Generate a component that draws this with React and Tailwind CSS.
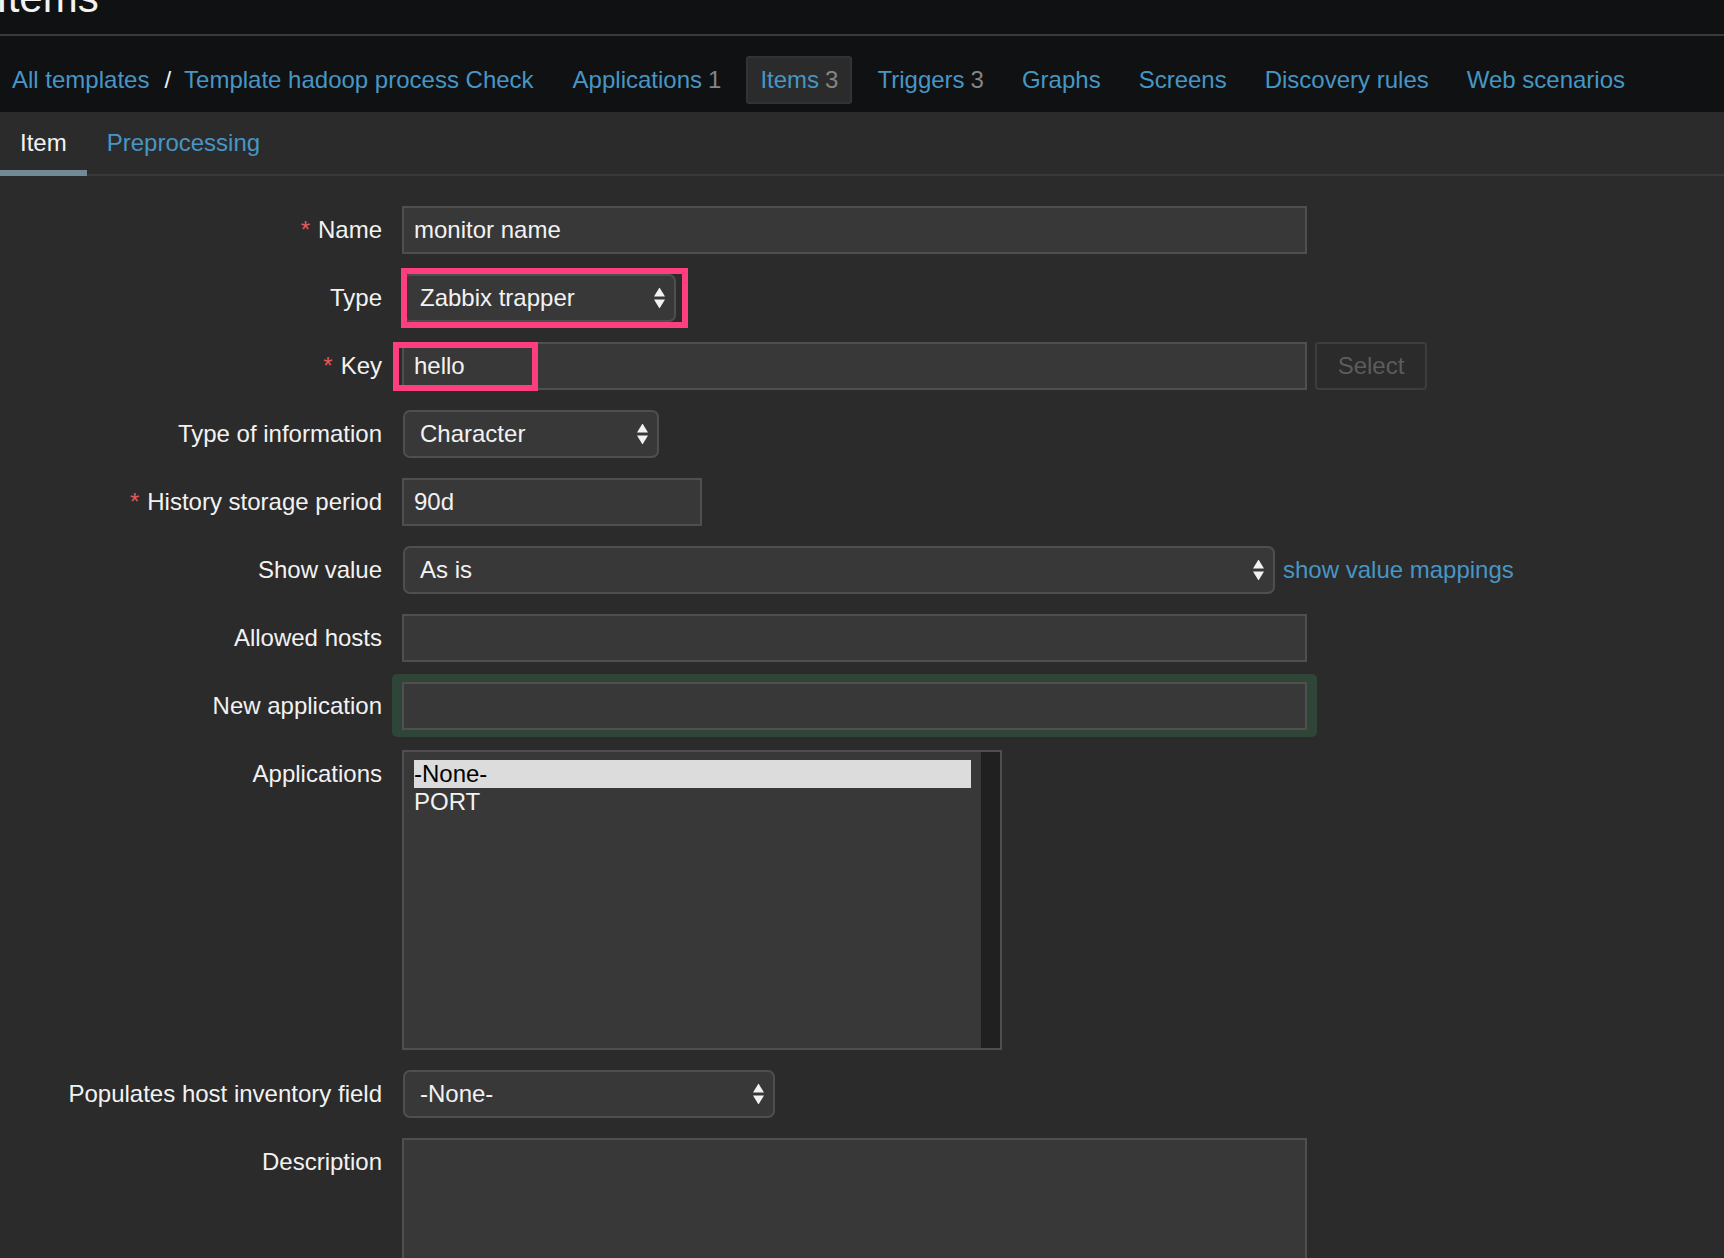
import React from 'react';

const SelectArrows = () => (
  <svg
    width="11"
    height="21"
    viewBox="0 0 11 21"
    className="absolute right-[9px] top-1/2 -translate-y-1/2"
  >
    <path d="M5.5 0L11 9H0Z" fill="#f2f2f2" />
    <path d="M0 12H11L5.5 21Z" fill="#f2f2f2" />
  </svg>
);

const FakeSelect = ({ value, width }) => (
  <div
    className={`relative ml-[1px] flex h-[48px] items-center rounded-[7px] border-2 border-[#4f4f4f] bg-[#383838] pl-[15px] ${width}`}
  >
    {value}
    <SelectArrows />
  </div>
);

const Label = ({ children, required }) => (
  <div className="flex h-[48px] w-[382px] shrink-0 items-center justify-end">
    {required && <span className="mr-[8px] text-[#e45959]">*</span>}
    {children}
  </div>
);

const Row = ({ label, required, children }) => (
  <div className="flex">
    <Label required={required}>{label}</Label>
    <div className="ml-[20px] flex items-center">{children}</div>
  </div>
);

const TextInput = ({ value, width = 'w-[905px]' }) => (
  <div
    className={`flex h-[48px] items-center border-2 border-[#4f4f4f] bg-[#383838] pl-[10px] ${width}`}
  >
    {value}
  </div>
);

const navLinks = [
  { label: 'Applications', count: '1' },
  { label: 'Items', count: '3', active: true },
  { label: 'Triggers', count: '3' },
  { label: 'Graphs' },
  { label: 'Screens' },
  { label: 'Discovery rules' },
  { label: 'Web scenarios' },
];

export default function App() {
  return (
    <div className="h-screen overflow-hidden bg-[#2b2b2b] font-['Liberation_Sans',Arial,sans-serif] text-[24px] text-[#f2f2f2]">
      {/* page title, mostly scrolled off */}
      <header className="h-[34px] overflow-hidden bg-[#0f1113]">
        <h1 className="-ml-[4px] -mt-[23px] text-[42px] leading-[42px] text-[#f2f2f2]">
          Items
        </h1>
      </header>

      <nav className="flex h-[78px] items-start border-t-2 border-[#3a3a3a] bg-[#0f1113] pt-[20px]">
        <div className="flex h-[48px] items-center">
          <a className="px-[12px] text-[#4796c4]">All templates</a>
          <span className="pl-[3px] pr-[1px] text-[#f2f2f2]">/</span>
          <a className="px-[12px] text-[#4796c4]">Template hadoop process Check</a>
        </div>
        <div className="ml-[14px] flex gap-[12px]">
          {navLinks.map((item) => (
            <div
              key={item.label}
              className={`flex h-[48px] items-center rounded-[3px] ${
                item.active ? 'border-2 border-[#333333] bg-[#2b2b2b] px-[12px]' : 'px-[13px]'
              }`}
            >
              <span className="text-[#4796c4]">{item.label}</span>
              {item.count && <span className="ml-[6px] text-[#858585]">{item.count}</span>}
            </div>
          ))}
        </div>
      </nav>

      <div className="flex h-[64px] border-b-2 border-[#383838]">
        <div className="relative flex items-center px-[20px] text-[#f2f2f2]">
          Item
          <span className="absolute -bottom-[2px] left-0 right-0 h-[6px] bg-[#728a96]" />
        </div>
        <div className="flex items-center px-[20px] text-[#4796c4]">Preprocessing</div>
      </div>

      <div className="flex flex-col gap-[20px] pt-[30px]">
        <Row label="Name" required>
          <TextInput value="monitor name" />
        </Row>

        <Row label="Type">
          <div className="relative">
            <FakeSelect value="Zabbix trapper" width="w-[273px]" />
            <div className="absolute -left-[1px] -top-[6px] h-[60px] w-[287px] border-[6px] border-[#ff3e7e]" />
          </div>
        </Row>

        <Row label="Key" required>
          <div className="relative">
            <TextInput value="hello" />
            <div className="absolute -left-[9px] top-0 h-[49px] w-[145px] border-[6px] border-[#ff3e7e]" />
          </div>
          <button className="ml-[8px] h-[48px] w-[112px] rounded-[4px] border-2 border-[#3d3d3d] text-[#5c5c5c]">
            Select
          </button>
        </Row>

        <Row label="Type of information">
          <FakeSelect value="Character" width="w-[256px]" />
        </Row>

        <Row label="History storage period" required>
          <TextInput value="90d" width="w-[300px]" />
        </Row>

        <Row label="Show value">
          <FakeSelect value="As is" width="w-[872px]" />
          <a className="ml-[8px] text-[#4796c4]">show value mappings</a>
        </Row>

        <Row label="Allowed hosts">
          <TextInput value="" />
        </Row>

        <div className="flex">
          <Label>New application</Label>
          <div className="-mb-[7px] ml-[10px] -mt-[8px] rounded-[5px] bg-[#2f4538] px-[10px] pb-[7px] pt-[8px]">
            <TextInput value="" />
          </div>
        </div>

        <Row label="Applications">
          <div className="flex h-[300px] w-[600px] self-start border-2 border-[#4f4f4f] bg-[#383838]">
            <div className="flex-1 px-[10px] pt-[8px]">
              <div className="h-[28px] bg-[#dcdcdc] leading-[28px] text-black">-None-</div>
              <div className="h-[28px] leading-[28px] text-[#f2f2f2]">PORT</div>
            </div>
            <div className="w-[19px] bg-[#202020]" />
          </div>
        </Row>

        <Row label="Populates host inventory field">
          <FakeSelect value="-None-" width="w-[372px]" />
        </Row>

        <div className="flex">
          <Label>Description</Label>
          <div className="ml-[20px] h-[220px] w-[905px] border-2 border-[#4f4f4f] bg-[#383838]" />
        </div>
      </div>
    </div>
  );
}
